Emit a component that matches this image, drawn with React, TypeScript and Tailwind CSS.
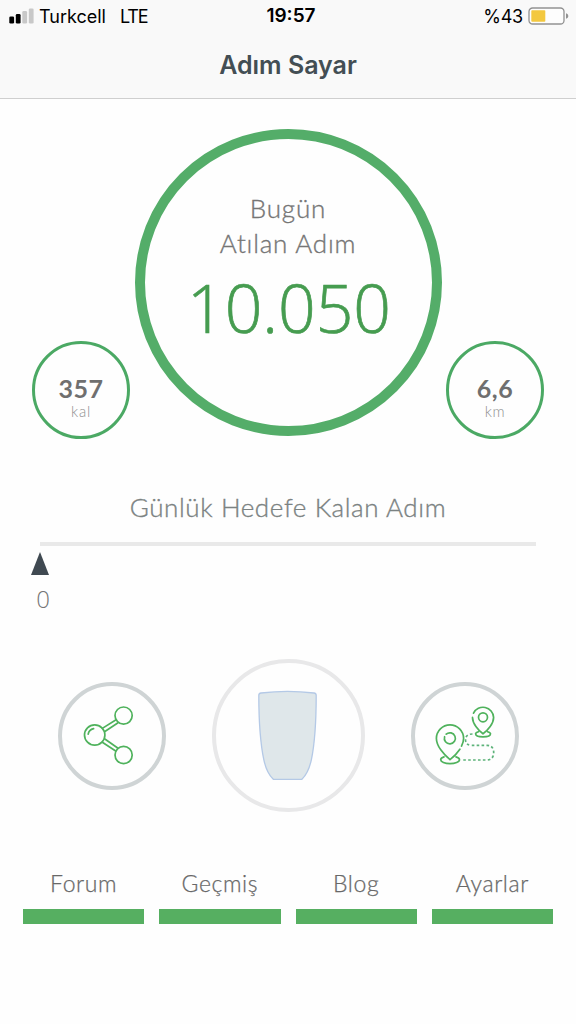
const MENU_ITEMS = ["Forum", "Geçmiş", "Blog", "Ayarlar"];

function SignalIcon() {
    return (
        <svg width="26" height="16" viewBox="0 0 26 16">
            <rect x="0.3" y="8.5" width="4.8" height="7" rx="1.3" fill="#000" />
            <rect x="6.8" y="6" width="4.8" height="9.5" rx="1.3" fill="#000" />
            <rect x="13.3" y="3" width="4.8" height="12.5" rx="1.3" fill="#c8c8c8" />
            <rect x="19.8" y="0.5" width="4.8" height="15" rx="1.3" fill="#c8c8c8" />
        </svg>
    );
}

function BatteryIcon() {
    return (
        <svg width="41" height="18" viewBox="0 0 41 18">
            <rect x="1" y="1" width="35" height="16" rx="3.6" fill="#fdfdfd" stroke="#929292" strokeWidth="1.3" />
            <rect x="3.3" y="3.3" width="14" height="11.4" rx="0.8" fill="#f3c83f" />
            <path d="M38 6.2c1.5.5 2.3 1.5 2.3 2.8s-.8 2.3-2.3 2.8z" fill="#929292" />
        </svg>
    );
}

function ShareIcon() {
    return (
        <svg width="108" height="108" viewBox="0 0 108 108" fill="none" stroke="#4fb25c" strokeWidth="1.7" strokeLinecap="round">
            <path d="M44.3 46.4 57.7 38M46.5 49.8 59.7 41M46.5 56.8 59.7 66M44.3 60.2 57.7 69" />
            <circle cx="36.7" cy="53" r="10.2" />
            <circle cx="65.6" cy="33.6" r="8.6" />
            <circle cx="65.6" cy="73" r="8.6" />
            <path d="M30.2 52.2c.4-2.8 2.4-4.9 5.4-5.6" />
        </svg>
    );
}

function GlassIcon() {
    return (
        <svg width="153" height="153" viewBox="0 0 153 153">
            <path
                d="M46.8 36.4c0-1.6.6-2.2 2.2-2.4 17-2 36-2 53 0 1.6.2 2.2.8 2.2 2.4 0 25-1.2 46.3-4.8 64.3-2 9-5.2 15.5-9.5 19.6H61.3c-4.3-4.1-7.6-10.6-9.5-19.6-3.7-18-5-39.3-5-64.3z"
                fill="#dfe7ea"
                stroke="#b4c9e6"
                strokeWidth="1.3"
            />
        </svg>
    );
}

function RouteIcon() {
    return (
        <svg width="108" height="108" viewBox="0 0 108 108" fill="none" stroke="#4fb25c" strokeWidth="1.7" strokeLinecap="round">
            {/* near pin */}
            <path d="M48.9 67.2C46 71.5 42.5 75 39 77.6c-6-4.8-13.6-13.5-13.6-21.2a13.6 13.6 0 1 1 27.2 0c0 2.7-.9 5.3-2.1 7.7" />
            <path d="M35.2 52.2a5.5 5.5 0 1 1-1.6 2.5" />
            <path d="M33 74.9c-2 .6-3.3 1.6-3.3 2.8 0 2.2 4.2 3.9 9.3 3.9s9.5-1.7 9.5-3.9c0-1.2-1.4-2.2-3.5-2.8" />
            {/* far pin */}
            <path d="M62.5 31.2a10.6 10.6 0 0 1 20.1 4.2c0 6-5.6 12.6-10.6 16.3-4.9-3.7-10.5-10.3-10.5-16.3" />
            <circle cx="72" cy="35.3" r="4.5" />
            <path d="M67.5 49.7c-1.8.5-2.9 1.2-2.9 2.1 0 1.8 3.3 3.1 7.4 3.1s7.5-1.3 7.5-3.1c0-.9-1.1-1.6-2.9-2.1" />
            <path
                d="M61.5 52c-4.5 0-7 2-7 5.8 0 3.5 2 5.5 6 5.5H76c4.5 0 6.7 3 6.7 7.3S80.5 78 76 78H50.5"
                stroke="#5db37a"
                strokeDasharray="2.6 2.3"
                strokeLinecap="butt"
            />
        </svg>
    );
}

function Stat({ value, unit }: { value: string; unit: string }) {
    return (
        <div className="flex size-[98px] flex-col items-center rounded-full border-3 border-[#4ba964] pt-[30px]">
            <span className="text-[25px] leading-[29px] font-bold tracking-[0.5px] text-[#6f6f6f]">{value}</span>
            <span className="text-[15px] leading-4 font-light tracking-[0.7px] text-[#8f8f8f]">{unit}</span>
        </div>
    );
}

export default function App() {
    return (
        <main className="flex h-[1024px] w-[576px] flex-col overflow-hidden bg-[#fefefe] font-['Lato',sans-serif]">
            <header className="h-[99px] border-b border-[#cfcfcf] bg-[#f9f9f9] font-['Inter',sans-serif]">
                <div className="grid h-8 grid-cols-3 items-center pr-[7px] pl-[9px] text-[18px] text-black">
                    <div className="flex items-center gap-1">
                        <SignalIcon />
                        <span>Turkcell</span>
                        <span className="ml-[10px] tracking-[-1.2px]">LTE</span>
                    </div>
                    <span className="pt-px pl-1 text-center text-[19px] font-semibold">19:57</span>
                    <div className="flex items-center justify-end gap-[5px]">
                        <span className="tracking-[-0.2px]">%43</span>
                        <BatteryIcon />
                    </div>
                </div>
                <h1 className="pt-[17px] text-center text-[25px] leading-8 font-semibold text-[#434e54]">Adım Sayar</h1>
            </header>

            <section className="mt-[30px] flex items-end justify-between px-8">
                <Stat value="357" unit="kal" />
                <div className="mb-[3px] flex size-[307px] flex-col items-center rounded-full border-10 border-[#54ad69] pt-[52px]">
                    <p className="text-center text-[26px] leading-[35px] font-light tracking-[0.8px] text-[#757575] [-webkit-text-stroke:0.35px]">
                        Bugün
                        <br />
                        Atılan Adım
                    </p>
                    <p className="mt-[10px] pl-[2px] font-['Open_Sans',sans-serif] text-[66px] leading-[72px] font-light text-[#469c50] [-webkit-text-stroke:0.7px]">
                        10.050
                    </p>
                </div>
                <Stat value="6,6" unit="km" />
            </section>

            <section className="mt-[52px] px-10">
                <h2 className="text-center text-[26px] leading-8 font-light tracking-[0.6px] text-[#7b8282] [-webkit-text-stroke:0.35px]">
                    Günlük Hedefe Kalan Adım
                </h2>
                <div className="mt-[19px] h-1 bg-[#e9e9e9]" />
                <div className="-ml-[9px] mt-[6px] flex w-6 flex-col">
                    <svg width="18" height="23" viewBox="0 0 18 23">
                        <path d="M9 0 18 23H0z" fill="#3f4951" />
                    </svg>
                    <span className="mt-2 text-center font-['Open_Sans',sans-serif] text-[24px] leading-8 font-light text-[#757575]">0</span>
                </div>
            </section>

            <section className="mt-11 flex items-center justify-between pr-[57px] pl-[58px]">
                <button className="flex size-[108px] items-center justify-center rounded-full border-4 border-[#cfd4d5]">
                    <span className="-m-1"><ShareIcon /></span>
                </button>
                <button className="flex size-[153px] items-center justify-center rounded-full border-4 border-[#e8e8e9]">
                    <span className="-m-1"><GlassIcon /></span>
                </button>
                <button className="flex size-[108px] items-center justify-center rounded-full border-4 border-[#cfd4d5]">
                    <span className="-m-1"><RouteIcon /></span>
                </button>
            </section>

            <nav className="mt-[55px] grid grid-cols-4 gap-[15px] px-[23px]">
                {MENU_ITEMS.map((item) => (
                    <a key={item} className="flex flex-col text-center text-[23px] leading-8 font-light tracking-[0.6px] text-[#686868] [-webkit-text-stroke:0.25px]">
                        {item}
                        <span className="mt-[10px] h-[15px] bg-[#56af61]" />
                    </a>
                ))}
            </nav>
        </main>
    );
}
